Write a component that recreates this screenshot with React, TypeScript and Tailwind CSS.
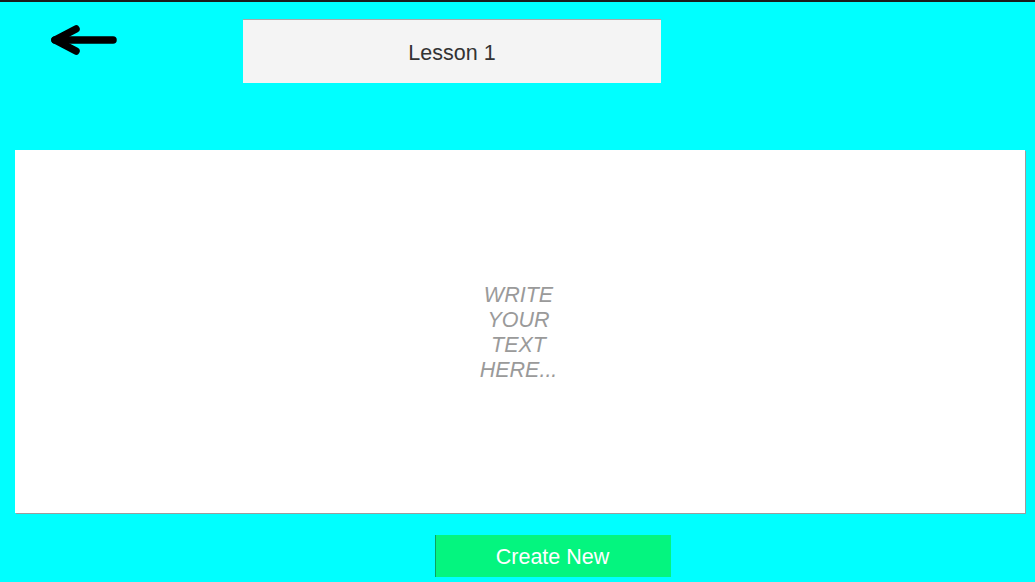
export default function App() {
  return (
    <div
      className="w-[1035px] h-[582px] bg-[#00ffff] border-t-2 border-[#1b1b1b] flex flex-col overflow-hidden"
      style={{ fontFamily: '"Liberation Sans", Arial, sans-serif' }}
    >
      <div className="flex items-start pt-[17px]">
        <svg
          className="ml-[48px] mt-[5px] shrink-0"
          width="70"
          height="32"
          viewBox="0 0 70 32"
          fill="none"
          stroke="#000"
          strokeWidth="7.5"
          strokeLinecap="round"
          strokeLinejoin="round"
        >
          <path d="M65 16 H7" />
          <path d="M28 5 L7 16 L28 27" />
        </svg>
        <div className="ml-[125px] w-[418px] h-[64px] bg-[#f4f4f4] border-t border-[#a8a8a8] flex items-center justify-center pt-[3px] text-[21.5px] text-[#333333]">
          Lesson 1
        </div>
      </div>
      <div className="ml-[15px] mt-[67px] w-[1010px] h-[363px] bg-white shadow-[1px_1px_0_#9c9c9c] flex items-center justify-center">
        <div className="w-[92px] text-center italic text-[21.5px] leading-[25px] text-[#9a9a9a] pr-[3px] pt-[3px]">
          WRITE YOUR TEXT HERE...
        </div>
      </div>
      <div className="ml-[435px] mt-[22px] w-[236px] h-[42px] bg-[#04f57f] border-l border-[#0ca35e] flex items-center justify-center pt-[2px] pr-[2px] text-white text-[21.5px]">
        Create New
      </div>
    </div>
  );
}
